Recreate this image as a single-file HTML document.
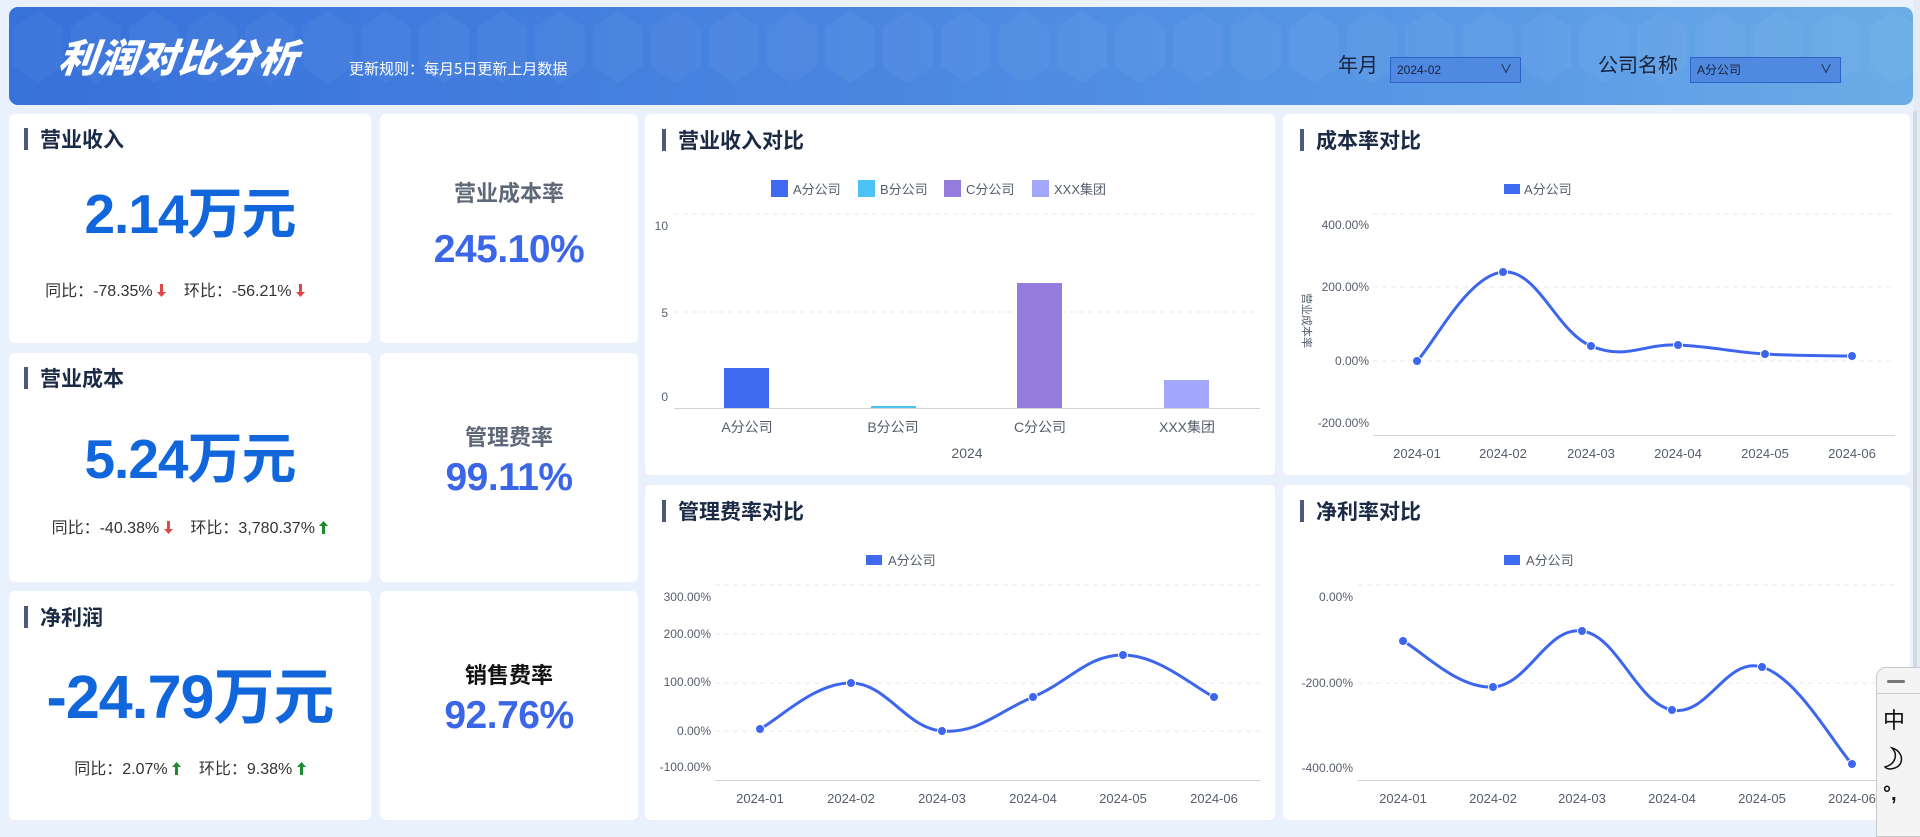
<!DOCTYPE html>
<html><head><meta charset="utf-8">
<style>
*{margin:0;padding:0;box-sizing:border-box}
body{width:1920px;height:828px;overflow:hidden;background:#e9f1fc;font-family:"Liberation Sans","Noto Sans CJK SC",sans-serif;position:relative}
.abs{position:absolute}
.hdr{left:9px;top:7px;width:1904px;height:98px;border-radius:9px;background:linear-gradient(90deg,#3771da 0%,#4a86e0 45%,#5b9be6 80%,#6cace6 100%);overflow:hidden}
.card{position:absolute;background:#fff;border-radius:6px}
.ttl{position:absolute;font-size:21px;font-weight:bold;color:#1b2a45;line-height:24px;padding-left:12px;font-family:"Noto Sans CJK SC",sans-serif}
.ttl:before{content:"";position:absolute;left:-4px;top:1px;width:4px;height:22px;background:#4a5a78}
.big{position:absolute;left:0;right:0;text-align:center;color:#1166db;font-weight:bold;font-family:"Liberation Sans","Noto Sans CJK SC",sans-serif;letter-spacing:-1px}
.cmp{position:absolute;left:0;right:0;text-align:center;font-size:16px;color:#333;font-family:"Liberation Sans","Noto Sans CJK SC",sans-serif;white-space:pre}
.lbl{position:absolute;left:0;right:0;text-align:center;font-size:22px;font-weight:bold;color:#5f6878;font-family:"Noto Sans CJK SC",sans-serif}
.pct{position:absolute;left:0;right:0;text-align:center;font-size:39px;font-weight:bold;color:#3c66e8;letter-spacing:-0.5px}
.sel{position:absolute;top:50px;height:26px;border:1px solid #2f62c8;background:#5089e0;font-size:12px;color:#17223a;padding:4px 6px;line-height:16px}
.ar{display:inline-block;width:9px;height:13px;vertical-align:-1px}
svg text{font-family:"Liberation Sans","Noto Sans CJK SC",sans-serif}
</style></head><body>
<div class="abs hdr">
<svg width="1904" height="98" style="position:absolute;left:0;top:0" opacity="0.04">
<defs><pattern id="hx" width="58" height="98" patternUnits="userSpaceOnUse"><path d="M29 4 L54 20 L54 60 L29 76 L4 60 L4 20 Z" fill="#fff"/></pattern></defs>
<rect width="1904" height="98" fill="url(#hx)"/></svg>
<div class="abs" style="left:50px;top:26px;font-size:39px;font-weight:900;font-style:italic;color:#fff;font-family:'Noto Sans CJK SC',sans-serif;line-height:46px;letter-spacing:1px;transform:skewX(-6deg)">利润对比分析</div>
<div class="abs" style="left:340px;top:52px;font-size:15px;color:#fff;font-family:'Noto Sans CJK SC',sans-serif;line-height:20px">更新规则：每月5日更新上月数据</div>
<div class="abs" style="left:1329px;top:42px;font-size:20px;color:#17223a;font-family:'Noto Sans CJK SC',sans-serif">年月</div>
<div class="sel" style="left:1381px;width:131px">2024-02<span style="position:absolute;right:8px;top:3px;font-size:12px">&#8744;</span></div>
<div class="abs" style="left:1589px;top:42px;font-size:20px;color:#17223a;font-family:'Noto Sans CJK SC',sans-serif">公司名称</div>
<div class="sel" style="left:1681px;width:151px;font-family:'Liberation Sans','Noto Sans CJK SC',sans-serif">A分公司<span style="position:absolute;right:8px;top:3px;font-size:12px">&#8744;</span></div>
</div>

<!-- KPI cards -->
<div class="card" style="left:9px;top:114px;width:362px;height:229px">
<div class="ttl" style="left:19px;top:13px">营业收入</div>
<div class="big" style="top:68px;font-size:55px;line-height:64px">2.14万元</div>
<div class="cmp" style="top:163px;padding-right:30px">同比：-78.35% <svg class="ar" viewBox="0 0 9 13"><path d="M3 0h3v8h3l-4.5 5L0 8h3z" fill="#e04848"/></svg>    环比：-56.21% <svg class="ar" viewBox="0 0 9 13"><path d="M3 0h3v8h3l-4.5 5L0 8h3z" fill="#e04848"/></svg></div>
</div>
<div class="card" style="left:380px;top:114px;width:258px;height:229px">
<div class="lbl" style="top:62px">营业成本率</div>
<div class="pct" style="top:114px">245.10%</div>
</div>
<div class="card" style="left:9px;top:353px;width:362px;height:229px">
<div class="ttl" style="left:19px;top:13px">营业成本</div>
<div class="big" style="top:74px;font-size:55px;line-height:64px">5.24万元</div>
<div class="cmp" style="top:161px">同比：-40.38% <svg class="ar" viewBox="0 0 9 13"><path d="M3 0h3v8h3l-4.5 5L0 8h3z" fill="#e04848"/></svg>    环比：3,780.37% <svg class="ar" viewBox="0 0 9 13"><path d="M3 13h3V5h3L4.5 0 0 5h3z" fill="#1f8b2f"/></svg></div>
</div>
<div class="card" style="left:380px;top:353px;width:258px;height:229px">
<div class="lbl" style="top:67px">管理费率</div>
<div class="pct" style="top:103px">99.11%</div>
</div>
<div class="card" style="left:9px;top:591px;width:362px;height:229px">
<div class="ttl" style="left:19px;top:14px">净利润</div>
<div class="big" style="top:70px;font-size:61px;line-height:72px">-24.79万元</div>
<div class="cmp" style="top:164px">同比：2.07% <svg class="ar" viewBox="0 0 9 13"><path d="M3 13h3V5h3L4.5 0 0 5h3z" fill="#1f8b2f"/></svg>    环比：9.38% <svg class="ar" viewBox="0 0 9 13"><path d="M3 13h3V5h3L4.5 0 0 5h3z" fill="#1f8b2f"/></svg></div>
</div>
<div class="card" style="left:380px;top:591px;width:258px;height:229px">
<div class="lbl" style="top:67px;color:#111">销售费率</div>
<div class="pct" style="top:103px">92.76%</div>
</div>

<!-- chart cards -->
<div class="card" style="left:645px;top:114px;width:630px;height:361px"><div class="ttl" style="left:21px;top:14px">营业收入对比</div></div>
<div class="card" style="left:1283px;top:114px;width:627px;height:361px"><div class="ttl" style="left:21px;top:14px">成本率对比</div></div>
<div class="card" style="left:645px;top:485px;width:630px;height:335px"><div class="ttl" style="left:21px;top:14px">管理费率对比</div></div>
<div class="card" style="left:1283px;top:485px;width:627px;height:335px"><div class="ttl" style="left:21px;top:14px">净利率对比</div></div>

<svg class="abs" style="left:0;top:0" width="1920" height="828">
<g font-size="13" fill="#555d6b">
<rect x="771" y="180" width="17" height="17" fill="#3d6aee"/><text x="793" y="194">A分公司</text>
<rect x="858" y="180" width="17" height="17" fill="#4cc2f7"/><text x="880" y="194">B分公司</text>
<rect x="944" y="180" width="17" height="17" fill="#957bdb"/><text x="966" y="194">C分公司</text>
<rect x="1032" y="180" width="17" height="17" fill="#a3a7fc"/><text x="1054" y="194">XXX集团</text>
<g stroke="#e6e8ec" stroke-dasharray="5,4"><line x1="674" y1="214" x2="1260" y2="214"/><line x1="674" y1="312" x2="1260" y2="312"/></g>
<line x1="674" y1="408.5" x2="1260" y2="408.5" stroke="#cfd2d8"/>
<text x="668" y="230" text-anchor="end" font-size="12">10</text><text x="668" y="317" text-anchor="end" font-size="12">5</text><text x="668" y="401" text-anchor="end" font-size="12">0</text>
<rect x="724" y="368" width="45" height="40" fill="#3d6aee"/>
<rect x="871" y="406" width="45" height="2" fill="#4cc2f7"/>
<rect x="1017" y="283" width="45" height="125" fill="#957bdb"/>
<rect x="1164" y="380" width="45" height="28" fill="#a3a7fc"/>
<g text-anchor="middle" font-size="14"><text x="747" y="432">A分公司</text><text x="893" y="432">B分公司</text><text x="1040" y="432">C分公司</text><text x="1187" y="432">XXX集团</text><text x="967" y="458">2024</text></g>

<rect x="1504" y="184" width="16" height="10" fill="#3d6aee"/><text x="1524" y="194">A分公司</text>
<g stroke="#e6e8ec" stroke-dasharray="5,4"><line x1="1373" y1="214" x2="1895" y2="214"/><line x1="1373" y1="287" x2="1895" y2="287"/><line x1="1373" y1="361" x2="1895" y2="361"/></g>
<line x1="1373" y1="435.5" x2="1895" y2="435.5" stroke="#cfd2d8"/>
<g text-anchor="end" font-size="12"><text x="1369" y="229">400.00%</text><text x="1369" y="291">200.00%</text><text x="1369" y="365">0.00%</text><text x="1369" y="427">-200.00%</text></g>
<text font-size="11" transform="translate(1303,293) rotate(90)" fill="#555d6b">营业成本率</text>
<g text-anchor="middle" font-size="13"><text x="1417" y="458">2024-01</text><text x="1503" y="458">2024-02</text><text x="1591" y="458">2024-03</text><text x="1678" y="458">2024-04</text><text x="1765" y="458">2024-05</text><text x="1852" y="458">2024-06</text></g>

<rect x="866" y="555" width="16" height="10" fill="#3d6aee"/><text x="888" y="565">A分公司</text>
<g stroke="#e6e8ec" stroke-dasharray="5,4"><line x1="715" y1="585" x2="1260" y2="585"/><line x1="715" y1="634" x2="1260" y2="634"/><line x1="715" y1="683" x2="1260" y2="683"/><line x1="715" y1="731" x2="1260" y2="731"/></g>
<line x1="715" y1="780.5" x2="1260" y2="780.5" stroke="#cfd2d8"/>
<g text-anchor="end" font-size="12"><text x="711" y="601">300.00%</text><text x="711" y="638">200.00%</text><text x="711" y="686">100.00%</text><text x="711" y="735">0.00%</text><text x="711" y="771">-100.00%</text></g>
<g text-anchor="middle" font-size="13"><text x="760" y="803">2024-01</text><text x="851" y="803">2024-02</text><text x="942" y="803">2024-03</text><text x="1033" y="803">2024-04</text><text x="1123" y="803">2024-05</text><text x="1214" y="803">2024-06</text></g>

<rect x="1504" y="555" width="16" height="10" fill="#3d6aee"/><text x="1526" y="565">A分公司</text>
<g stroke="#e6e8ec" stroke-dasharray="5,4"><line x1="1358" y1="585" x2="1897" y2="585"/><line x1="1358" y1="683" x2="1897" y2="683"/></g>
<line x1="1358" y1="780.5" x2="1897" y2="780.5" stroke="#cfd2d8"/>
<g text-anchor="end" font-size="12"><text x="1353" y="601">0.00%</text><text x="1353" y="687">-200.00%</text><text x="1353" y="772">-400.00%</text></g>
<g text-anchor="middle" font-size="13"><text x="1403" y="803">2024-01</text><text x="1493" y="803">2024-02</text><text x="1582" y="803">2024-03</text><text x="1672" y="803">2024-04</text><text x="1762" y="803">2024-05</text><text x="1852" y="803">2024-06</text></g>
</g>
<g id="lines" fill="none" stroke="#3d66ee" stroke-width="3"></g>
<g id="dots" fill="#3d66ee"></g>
<rect x="1913" y="0" width="7" height="828" fill="#e4ebf5"/>
<rect x="1913" y="111" width="4" height="612" rx="2" fill="#d2d9e3"/>
</svg>

<div class="abs" style="left:1876px;top:667px;width:46px;height:170px;background:#f4f4f4;border:1px solid #c8c8c8;border-radius:10px 0 0 0">
<div class="abs" style="left:10px;top:12px;width:18px;height:3px;background:#777;border-radius:2px"></div>
<div class="abs" style="left:0;top:25px;width:46px;height:1px;background:#ccc"></div>
<div class="abs" style="left:6px;top:38px;font-size:22px;color:#111;font-family:'Noto Sans CJK SC',sans-serif;line-height:26px">中</div>
<svg class="abs" style="left:7px;top:78px" width="24" height="26"><path d="M8 2 C20 5 22 22 6 23 C4 23 2 22 1 21 C12 18 14 8 8 2 Z" fill="none" stroke="#111" stroke-width="1.5"/></svg>
<div class="abs" style="left:6px;top:114px;font-size:20px;color:#111;font-weight:bold;line-height:24px">°,</div>
</div>

<script>
function path(p){var d="M"+p[0][0]+" "+p[0][1];var s=0.2;
for(var i=0;i<p.length-1;i++){var p0=p[i-1]||p[i],p1=p[i],p2=p[i+1],p3=p[i+2]||p[i+1];
var c1x=p1[0]+(p2[0]-p0[0])*s,c1y=p1[1]+(p2[1]-p0[1])*s,c2x=p2[0]-(p3[0]-p1[0])*s,c2y=p2[1]-(p3[1]-p1[1])*s;
d+=" C"+c1x+" "+c1y+" "+c2x+" "+c2y+" "+p2[0]+" "+p2[1];}return d;}
var sets=[
[[1417,361],[1503,272],[1591,346],[1678,345],[1765,354],[1852,356]],
[[760,729],[851,683],[942,731],[1033,697],[1123,655],[1214,697]],
[[1403,641],[1493,687],[1582,631],[1672,710],[1762,667],[1852,764]]];
var NS="http://www.w3.org/2000/svg",L=document.getElementById("lines"),D=document.getElementById("dots");
sets.forEach(function(p){var e=document.createElementNS(NS,"path");e.setAttribute("d",path(p));L.appendChild(e);
p.forEach(function(q){var c=document.createElementNS(NS,"circle");c.setAttribute("cx",q[0]);c.setAttribute("cy",q[1]);c.setAttribute("r",4.5);c.setAttribute("stroke","#fff");c.setAttribute("stroke-width","1");D.appendChild(c);});});
</script>
</body></html>
